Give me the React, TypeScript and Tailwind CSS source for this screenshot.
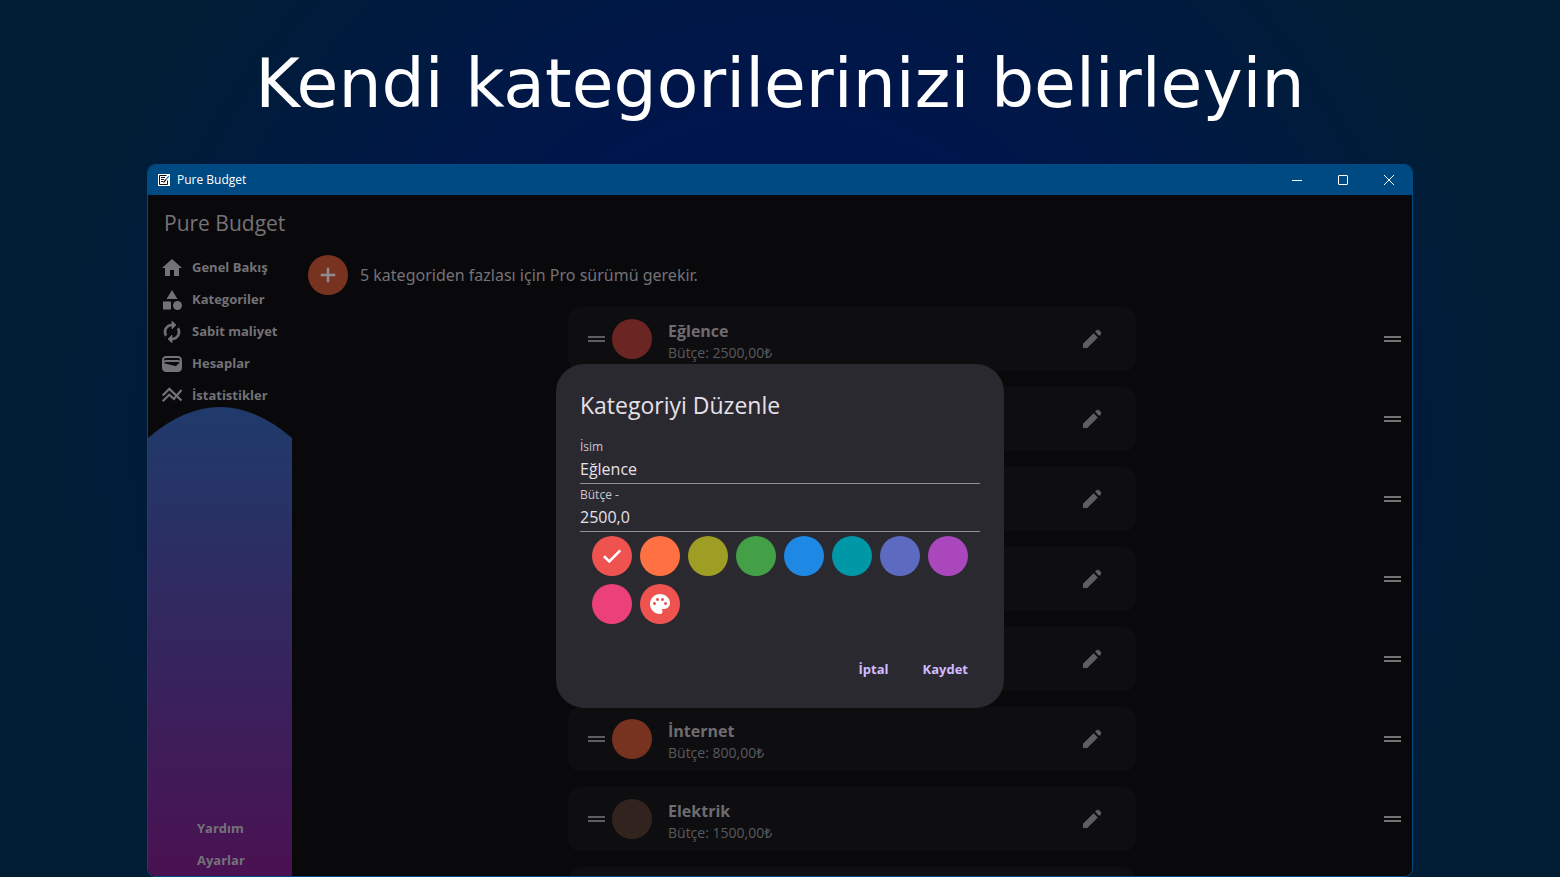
import React from "react";
import { MdCategory, MdHome, MdPalette, MdWallet } from "react-icons/md";

type Category = { id: number; name?: string; budget?: string; dot: string };

const categories: Category[] = [
  { id: 1, name: "Eğlence", budget: "Bütçe: 2500,00₺", dot: "bg-[#6b2624]" },
  { id: 2, dot: "bg-[#1f4a21]" },
  { id: 3, dot: "bg-[#0e3f6b]" },
  { id: 4, dot: "bg-[#00454c]" },
  { id: 5, dot: "bg-[#4a1f55]" },
  { id: 6, name: "İnternet", budget: "Bütçe: 800,00₺", dot: "bg-[#77331f]" },
  { id: 7, name: "Elektrik", budget: "Bütçe: 1500,00₺", dot: "bg-[#33231f]" },
  { id: 8, dot: "bg-[#33231f]" },
];

const swatches = [
  { bg: "bg-[#ef5350]", selected: true },
  { bg: "bg-[#ff7043]" },
  { bg: "bg-[#9e9d24]" },
  { bg: "bg-[#43a047]" },
  { bg: "bg-[#1e88e5]" },
  { bg: "bg-[#0097a7]" },
  { bg: "bg-[#5c6bc0]" },
  { bg: "bg-[#ab47bc]" },
  { bg: "bg-[#ec407a]" },
];

function TrendIcon() {
  return (
    <svg viewBox="0 0 24 24" className="size-6" fill="none" stroke="currentColor" strokeWidth="2.200" aria-hidden="true">
      <path d="M2.700 11.500 9.300 4.900 21.500 16.500" />
      <path d="M2.700 17.300 9.300 10.700 13.900 15 21.500 6" />
    </svg>
  );
}

function RenewIcon() {
  return (
    <svg viewBox="0 0 24 24" className="size-6" fill="currentColor" stroke="currentColor" strokeWidth="0.700" aria-hidden="true">
      <path d="M12 6v3l4-4-4-4v3c-4.420 0-8 3.580-8 8 0 1.570.46 3.030 1.240 4.260L6.700 14.800A5.870 5.870 0 0 1 6 12c0-3.310 2.690-6 6-6zm6.760 1.740L17.300 9.200c.44.84.7 1.790.7 2.800 0 3.310-2.690 6-6 6v-3l-4 4 4 4v-3c4.420 0 8-3.580 8-8 0-1.570-.46-3.030-1.240-4.260z" />
    </svg>
  );
}

function PlusIcon() {
  return (
    <svg viewBox="0 0 24 24" className="size-6" fill="none" stroke="currentColor" strokeWidth="2.600" aria-hidden="true">
      <path d="M12 4.700v14.600M4.700 12h14.600" />
    </svg>
  );
}

function TickIcon() {
  return (
    <svg viewBox="0 0 24 24" className="size-6" fill="none" stroke="currentColor" strokeWidth="2.600" aria-hidden="true">
      <path d="M4 12.300 9.300 17.400 20.300 6.400" />
    </svg>
  );
}

function PencilIcon() {
  return (
    <svg viewBox="0 0 24 24" className="size-6" fill="currentColor" aria-hidden="true">
      <path d="M19.300 8.925l-4.250-4.200 1.400-1.400q.575-.575 1.413-.575t1.412.575l1.400 1.400q.575.575.6 1.388t-.55 1.387L19.300 8.925ZM17.850 10.400 7.250 21H3v-4.250l10.600-10.600 4.250 4.250Z" />
    </svg>
  );
}

function DragHandle() {
  return (
    <svg viewBox="0 0 24 24" className="size-6" fill="currentColor" aria-hidden="true">
      <path d="M4 9h17v2H4zM4 13h17v2H4z" />
    </svg>
  );
}

function AppLogo() {
  return (
    <svg viewBox="0 0 12 12" className="size-3" aria-hidden="true">
      <path fill="#fff" d="M0 0h12v12H0z" />
      <path fill="none" stroke="#111" d="M9.500 6.500v4h-8v-9h7" />
      <path fill="none" stroke="#111" d="M3 3.500h4M3 5.500h3M3 7.500h2" />
      <path fill="none" stroke="#111" strokeWidth="1.200" d="M5.500 8.500 8 5.500" />
      <path fill="none" stroke="#2b7fc4" strokeWidth="1.200" d="M8 5.500l3-3.500" />
    </svg>
  );
}

const nav = [
  { label: "Genel Bakış", icon: <MdHome className="size-6" /> },
  { label: "Kategoriler", icon: <MdCategory className="size-6" /> },
  { label: "Sabit maliyet", icon: <RenewIcon /> },
  { label: "Hesaplar", icon: <MdWallet className="size-6" /> },
  { label: "İstatistikler", icon: <TrendIcon /> },
];

function TitleBar() {
  return (
    <header className="flex h-[30px] shrink-0 items-center bg-[#004a83] pl-[10px] text-white">
      <AppLogo />
      <span className="ml-[7px] text-xs">Pure Budget</span>
      <div className="ml-auto flex">
        <button aria-label="Simge durumuna küçült" className="grid h-7 w-[46px] place-items-center">
          <svg viewBox="0 0 10 10" className="size-[10px]" stroke="currentColor" fill="none">
            <path d="M0 5.500h10" />
          </svg>
        </button>
        <button aria-label="Ekranı kapla" className="grid h-7 w-[46px] place-items-center">
          <svg viewBox="0 0 10 10" className="size-[10px]" stroke="currentColor" fill="none">
            <rect x="0.500" y="0.500" width="9" height="9" rx="0.500" />
          </svg>
        </button>
        <button aria-label="Pencereyi kapat" className="grid h-7 w-[46px] place-items-center">
          <svg viewBox="0 0 10 10" className="size-[10px]" stroke="currentColor" fill="none">
            <path d="M0 0l10 10M10 0L0 10" />
          </svg>
        </button>
      </div>
    </header>
  );
}

function Sidebar() {
  return (
    <aside className="flex w-36 shrink-0 flex-col text-[#747278]">
      <div className="pt-[10px] pl-4 text-[21px] leading-9 whitespace-nowrap">Pure Budget</div>
      <nav className="mt-[11px] flex flex-col">
        {nav.map((n) => (
          <a key={n.label} href="#" className="flex h-8 items-center gap-2 pl-3 text-[13px] font-bold whitespace-nowrap">
            {n.icon}
            {n.label}
          </a>
        ))}
      </nav>
      <div className="relative -mt-[5px] flex flex-1 flex-col justify-end">
        <svg viewBox="0 0 144 470" preserveAspectRatio="none" className="absolute inset-0 size-full" aria-hidden="true">
          <defs>
            <linearGradient id="wave" x1="0" y1="0" x2="0" y2="1">
              <stop offset="0" stopColor="#1f3b6b" />
              <stop offset="1" stopColor="#4a1152" />
            </linearGradient>
          </defs>
          <path fill="url(#wave)" d="M0 31Q72-31 144 31V470H0z" />
        </svg>
        <div className="relative -mb-px flex flex-col">
          <a href="#" className="flex h-8 items-center pl-[49px] text-[13px] font-bold">Yardım</a>
          <a href="#" className="flex h-8 items-center pl-[49px] text-[13px] font-bold">Ayarlar</a>
        </div>
      </div>
    </aside>
  );
}

function CategoryRow({ item }: { item: Category }) {
  return (
    <li className="grid grid-cols-[1fr_568px_1fr] items-center">
      <div className="col-start-2 flex h-16 items-center rounded-xl bg-[#0e0e10] pr-8 pl-4">
        <span className="text-[#5e5d61]">
          <DragHandle />
        </span>
        <span className={`ml-1 size-10 rounded-full ${item.dot}`} />
        <div className="ml-4 flex flex-col pt-1">
          <span className="text-base leading-6 font-bold text-[#6e6c70]">{item.name}</span>
          <span className="text-sm leading-5 text-[#5a595d]">{item.budget}</span>
        </div>
        <button aria-label="Düzenle" className="ml-auto text-[#5e5d61]">
          <PencilIcon />
        </button>
      </div>
      <div className="flex justify-end pr-2 text-[#737373]">
        <DragHandle />
      </div>
    </li>
  );
}

function EditDialog() {
  return (
    <div role="dialog" aria-labelledby="dlg-title" className="w-[448px] rounded-[28px] bg-[#2b2930] px-6 pt-6 pb-[18px] text-[#e6e0e9]">
      <h2 id="dlg-title" className="text-[23px] leading-[34px]">Kategoriyi Düzenle</h2>
      <form className="mt-[14px]" onSubmit={(e) => e.preventDefault()}>
        <label htmlFor="name" className="block h-6 pt-[3px] text-xs leading-4 text-[#cac4d0]">İsim</label>
        <input id="name" defaultValue="Eğlence" className="block h-6 w-full border-b border-[#938f99] bg-transparent pb-1 text-base outline-none" />
        <label htmlFor="budget" className="block h-6 pt-[3px] text-xs leading-4 text-[#cac4d0]">Bütçe -</label>
        <input id="budget" defaultValue="2500,0" className="block h-6 w-full border-b border-[#938f99] bg-transparent pb-1 text-base outline-none" />
        <div className="mt-1 flex flex-wrap gap-2 px-3">
          {swatches.map((s) => (
            <button key={s.bg} type="button" aria-label="Renk" className={`grid size-10 place-items-center rounded-full text-white ${s.bg}`}>
              {s.selected && <TickIcon />}
            </button>
          ))}
          <button type="button" aria-label="Özel renk" className="grid size-10 place-items-center rounded-full bg-[#ef5350] text-white">
            <MdPalette className="size-6" />
          </button>
        </div>
        <div className="mt-[26px] flex justify-end gap-[10px] text-[13px] font-bold text-[#d0bcff]">
          <button type="button" className="h-10 px-3">İptal</button>
          <button type="submit" className="h-10 px-3">Kaydet</button>
        </div>
      </form>
    </div>
  );
}

export default function App() {
  return (
    <div className="flex h-screen flex-col overflow-hidden bg-[radial-gradient(circle_at_center,#000f5c_0%,#001748_45%,#001d36_80%,#001d33_100%)] px-[147px] font-['Open_Sans','Noto_Sans',sans-serif]">
      <h1 className="flex h-[164px] shrink-0 items-center justify-center pt-1 font-['DejaVu_Sans',sans-serif] text-[68px] whitespace-nowrap text-white">
        Kendi kategorilerinizi belirleyin
      </h1>
      <div className="flex min-h-0 flex-1 flex-col overflow-hidden rounded-lg border border-[#004a83] bg-[#09090b]">
        <TitleBar />
        <div className="relative flex min-h-0 flex-1">
          <Sidebar />
          <main className="min-w-0 flex-1 overflow-hidden pt-[60px]">
            <div className="flex items-center gap-3 pl-4 font-['Noto_Sans',sans-serif] text-base text-[#747278]">
              <button aria-label="Kategori ekle" className="grid size-10 place-items-center rounded-full bg-[#77331f] text-[#8d8b8f]">
                <PlusIcon />
              </button>
              5 kategoriden fazlası için Pro sürümü gerekir.
            </div>
            <ul className="mt-3 flex flex-col gap-4">
              {categories.map((c) => (
                <CategoryRow key={c.id} item={c} />
              ))}
            </ul>
          </main>
          <div className="absolute inset-0 grid place-items-center">
            <EditDialog />
          </div>
        </div>
      </div>
    </div>
  );
}
